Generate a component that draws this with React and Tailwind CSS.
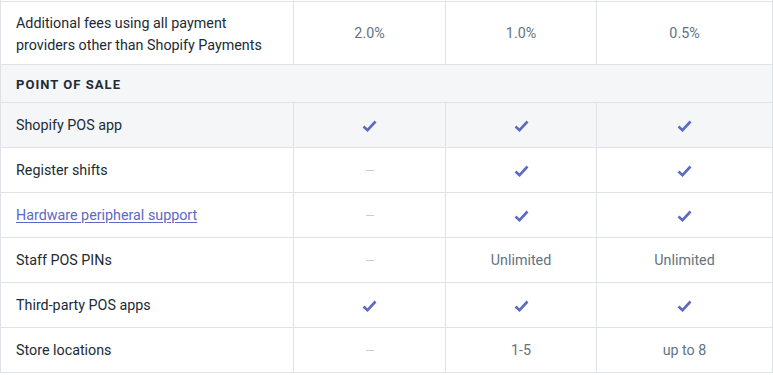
const font = { fontFamily: 'Roboto, "Noto Sans", sans-serif' };

const ROWS = [
  { label: 'Shopify POS app', values: ['check', 'check', 'check'], shaded: true },
  { label: 'Register shifts', values: ['dash', 'check', 'check'] },
  { label: 'Hardware peripheral support', values: ['dash', 'check', 'check'], link: true },
  { label: 'Staff POS PINs', values: ['dash', 'Unlimited', 'Unlimited'] },
  { label: 'Third-party POS apps', values: ['check', 'check', 'check'] },
  { label: 'Store locations', values: ['dash', '1-5', 'up to 8'] },
];

const gridCols = 'grid grid-cols-[292px_152px_151px_1fr]';

function Check() {
  return (
    <svg width="15" height="12" viewBox="0 0 15 12" fill="none">
      <path d="M1.5 6.5 L5.5 10.2 L13.5 1.5" stroke="#5c6ac4" strokeWidth="2.6" strokeLinejoin="miter" />
    </svg>
  );
}

function Value({ v }) {
  if (v === 'check') return <Check />;
  if (v === 'dash') return <span className="block w-[8px] h-px bg-[#c4cdd5]" />;
  return <span className="text-[14.3px] text-[#637381]">{v}</span>;
}

export default function App() {
  return (
    <div className="w-[773px] h-[375px] bg-white overflow-hidden" style={font}>
      <div className="border-l border-r border-[#dfe3e8]">
        <div className={`${gridCols} h-[2px] border-b border-[#dfe3e8]`}>
          <div />
          <div className="border-l border-[#dfe3e8]" />
          <div className="border-l border-[#dfe3e8]" />
          <div className="border-l border-[#dfe3e8]" />
        </div>

        <div className={`${gridCols} h-[63px] border-b border-[#dfe3e8]`}>
          <div className="flex items-center pl-[15px] pr-3 pt-[2px] text-[14.3px] leading-[22px] text-[#212b36]">
            Additional fees using all payment providers other than Shopify Payments
          </div>
          {['2.0%', '1.0%', '0.5%'].map((v) => (
            <div key={v} className="flex items-center justify-center pt-[2px] border-l border-[#dfe3e8] text-[14.3px] text-[#637381]">
              {v}
            </div>
          ))}
        </div>

        <div className="h-[38px] flex items-center pl-[15px] pt-[2px] bg-[#f4f6f8] border-b border-[#dfe3e8]">
          <span className="text-[13px] font-bold tracking-[0.08em] text-[#212b36]">POINT OF SALE</span>
        </div>

        {ROWS.map((row) => (
          <div
            key={row.label}
            className={`${gridCols} h-[45px] border-b border-[#dfe3e8] ${row.shaded ? 'bg-[#f4f6f8]' : ''}`}
          >
            <div className="flex items-center pl-[15px] pt-[2px] text-[14.3px] text-[#212b36]">
              {row.link ? (
                <a href="#" className="text-[#5c6ac4] underline underline-offset-2">{row.label}</a>
              ) : (
                row.label
              )}
            </div>
            {row.values.map((v, i) => (
              <div key={i} className="flex items-center justify-center pt-[1px] border-l border-[#dfe3e8]">
                <Value v={v} />
              </div>
            ))}
          </div>
        ))}
      </div>
    </div>
  );
}
